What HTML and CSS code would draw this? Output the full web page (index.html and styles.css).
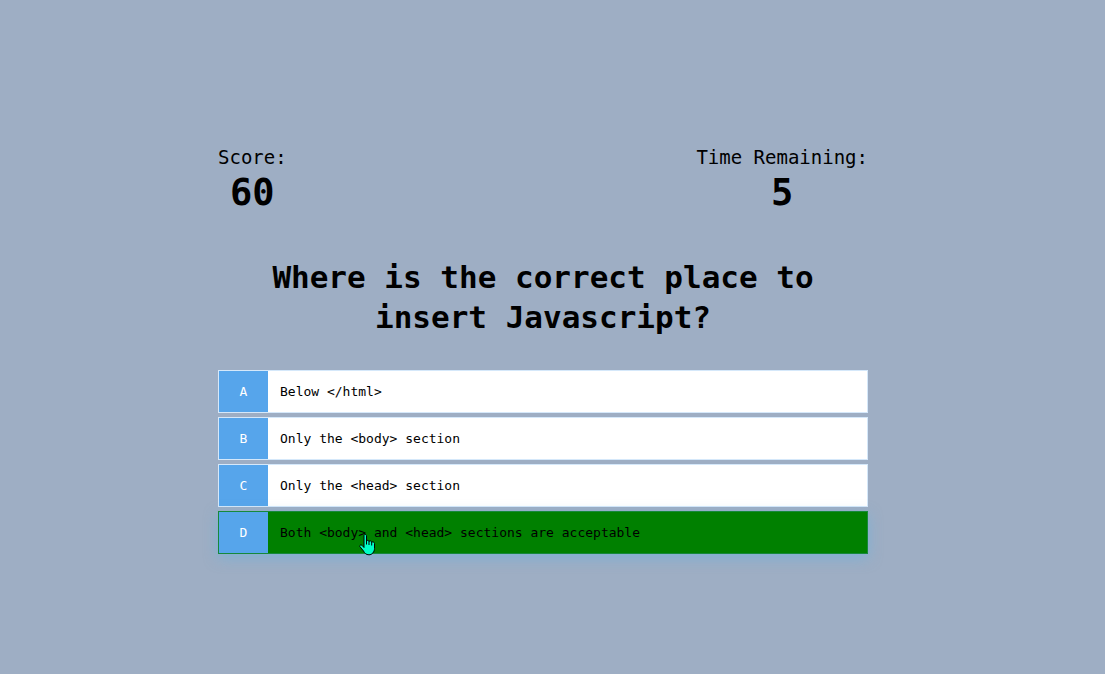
FILE: index.html
```html
<!DOCTYPE html>
<html lang="en">
<head>
<meta charset="utf-8">
<title>Quiz</title>
<link rel="stylesheet" href="styles.css">
</head>
<body>
<main class="quiz">
  <header class="hud">
    <div class="hud-item">
      <p class="hud-label">Score:</p>
      <p class="hud-value">60</p>
    </div>
    <div class="hud-item">
      <p class="hud-label">Time Remaining:</p>
      <p class="hud-value">5</p>
    </div>
  </header>
  <h1 class="question">Where is the correct place to insert Javascript?</h1>
  <div class="choices">
    <button type="button" class="choice"><span class="prefix">A</span><span class="text">Below &lt;/html&gt;</span></button>
    <button type="button" class="choice"><span class="prefix">B</span><span class="text">Only the &lt;body&gt; section</span></button>
    <button type="button" class="choice"><span class="prefix">C</span><span class="text">Only the &lt;head&gt; section</span></button>
    <button type="button" class="choice correct"><span class="prefix">D</span><span class="text">Both &lt;body&gt; and &lt;head&gt; sections are acceptable</span></button>
    <svg class="pointer" viewBox="0 0 17 22" aria-hidden="true">
      <path d="M5 1.500C5 .2 7.500 .2 7.500 1.500V7C8 6 10 6.200 10 7.400C10.700 6.500 12.700 6.900 12.700 8.200C13.500 7.500 15.500 8 15.500 9.500V14.500C15.500 18 13 20.800 10 20.800C7 20.800 5.500 19 4.500 17L.8 12.500C.4 11 2.200 10.500 3.200 11.500L5 13.500Z" fill="#00ffc8" stroke="#000" stroke-linejoin="round"/>
      <path d="M7.500 6V10.500M10 7V11M12.700 8V11.500" fill="none" stroke="#000"/>
    </svg>
  </div>
</main>
</body>
</html>
```

FILE: styles.css
```css
* {
  box-sizing: border-box;
  margin: 0;
}

body {
  min-height: 100vh;
  padding: 145px 19px 24px 0;
  background: #9eaec4;
  color: #000;
  font-family: Consolas, "DejaVu Sans Mono", monospace;
}

.quiz {
  width: 100%;
  max-width: 650px;
  margin: 0 auto;
}

.hud {
  display: flex;
  justify-content: space-between;
}

.hud-item {
  text-align: center;
}

.hud-label {
  font-size: 19px;
  line-height: 24px;
}

.hud-value {
  font-size: 37px;
  font-weight: bold;
  line-height: 48px;
}

.question {
  margin: 40px 0 33px;
  font-size: 31px;
  line-height: 40px;
  text-align: center;
}

.choices {
  position: relative;
  display: flex;
  flex-direction: column;
  gap: 4px;
}

.choice {
  display: flex;
  width: 100%;
  padding: 0;
  border: 1px solid rgba(86, 165, 235, 0.25);
  background: #fff;
  color: #000;
  font: inherit;
  font-size: 13px;
  line-height: 41px;
  text-align: left;
  cursor: pointer;
}

.choice.correct {
  background: #008000;
  box-shadow: 0 4px 14px rgba(96, 180, 230, 0.5);
}

.prefix {
  flex: none;
  width: 49px;
  background: #56a5eb;
  color: #fff;
  text-align: center;
}

.text {
  flex: 1;
  padding: 0 12px;
}

.pointer {
  position: absolute;
  left: 141px;
  top: 164px;
  width: 17px;
  height: 22px;
}
```
